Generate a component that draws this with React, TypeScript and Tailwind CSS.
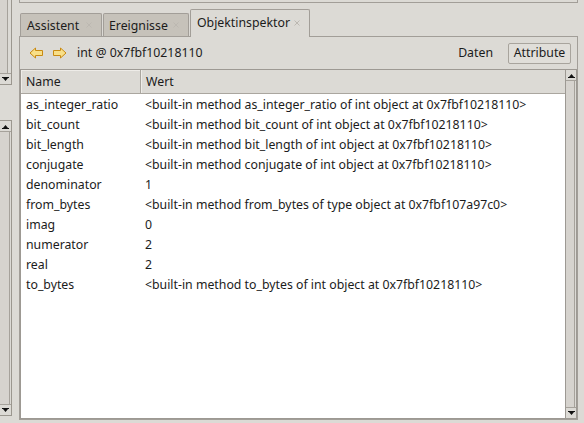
import React from "react";

const rows: [string, string][] = [
  ["as_integer_ratio", "<built-in method as_integer_ratio of int object at 0x7fbf10218110>"],
  ["bit_count", "<built-in method bit_count of int object at 0x7fbf10218110>"],
  ["bit_length", "<built-in method bit_length of int object at 0x7fbf10218110>"],
  ["conjugate", "<built-in method conjugate of int object at 0x7fbf10218110>"],
  ["denominator", "1"],
  ["from_bytes", "<built-in method from_bytes of type object at 0x7fbf107a97c0>"],
  ["imag", "0"],
  ["numerator", "2"],
  ["real", "2"],
  ["to_bytes", "<built-in method to_bytes of int object at 0x7fbf10218110>"],
];

function ArrowLeft() {
  return (
    <svg width="15" height="12" viewBox="0 0 15 12">
      <path
        d="M1 6 L6.5 1 V3.5 H13.5 V8.5 H6.5 V11 Z"
        fill="#f8df88"
        stroke="#c98a12"
        strokeWidth="1"
        strokeLinejoin="round"
      />
    </svg>
  );
}

function ArrowRight() {
  return (
    <svg width="15" height="12" viewBox="0 0 15 12">
      <path
        d="M14 6 L8.5 1 V3.5 H1.5 V8.5 H8.5 V11 Z"
        fill="#f8df88"
        stroke="#c98a12"
        strokeWidth="1"
        strokeLinejoin="round"
      />
    </svg>
  );
}

function TriDown() {
  return (
    <svg width="7" height="5" viewBox="0 0 7 5">
      <path d="M0 0 H7 V1 H0 Z M1 1 H6 L3.5 4 Z" fill="#111" />
    </svg>
  );
}

function TriUp() {
  return (
    <svg width="7" height="5" viewBox="0 0 7 5">
      <path d="M0 4 H7 V5 H0 Z M1 4 H6 L3.5 1 Z" fill="#111" />
    </svg>
  );
}

function Close() {
  return (
    <svg width="6" height="6" viewBox="0 0 6 6">
      <path d="M0.5 0.5 L5.5 5.5 M5.5 0.5 L0.5 5.5" stroke="#bcb8b1" strokeWidth="1" />
    </svg>
  );
}

export default function App() {
  return (
    <div className="w-[584px] h-[423px] bg-[#dcdad5] flex overflow-hidden font-['Noto_Sans','Open_Sans',sans-serif] text-[#1b1b1b] text-[12.3px]">
      {/* left scrollbars */}
      <div className="w-[12px] flex flex-col">
        <div className="h-[85px] flex flex-col border-r border-b border-[#9b978f]">
          <div className="flex-1 flex">
            <div className="w-[8px] border-r border-[#a6a29b] bg-[#d6d3ce]" />
            <div className="flex-1" />
          </div>
          <div className="h-[11px] border-t border-[#a6a29b] flex items-center justify-center">
            <TriDown />
          </div>
        </div>
        <div className="h-[35px]" />
        <div className="h-[296px] flex flex-col border-r border-t border-b border-[#9b978f]">
          <div className="h-[11px] border-b border-[#a6a29b] flex items-center justify-center">
            <TriUp />
          </div>
          <div className="flex-1 flex">
            <div className="w-[10px] border-r border-[#a6a29b] bg-[#d6d3ce]" />
            <div className="flex-1" />
          </div>
          <div className="h-[11px] border-t border-[#a6a29b] flex items-center justify-center">
            <TriDown />
          </div>
        </div>
      </div>

      <div className="w-[7px]" />

      {/* main */}
      <div className="w-[559px] flex flex-col">
        <div className="h-[3px] border-l border-r border-b border-[#a29e98]" />
        <div className="h-[6px]" />
        <div className="h-[27px] flex items-end pl-px">
          <div className="w-[82px] h-[23px] flex items-center justify-between pl-[6px] pr-[9px] bg-[#c6c2ba] border border-b-0 border-[#a29e98] rounded-t-[2px]">
            <span className="leading-[16px] pt-px">Assistent</span>
            <Close />
          </div>
          <div className="w-[86px] h-[23px] ml-px flex items-center justify-between pl-[5px] pr-[9px] bg-[#c6c2ba] border border-b-0 border-[#a29e98] rounded-t-[2px]">
            <span className="leading-[16px] pt-px">Ereignisse</span>
            <Close />
          </div>
          <div className="w-[120px] h-[28px] ml-[1px] -mb-px relative z-10 flex items-start justify-between pt-[5px] pl-[6px] pr-[9px] bg-[#dcdad5] border border-b-0 border-[#a29e98] rounded-t-[2px]">
            <span className="leading-[16px]">Objektinspektor</span>
            <div className="pt-[5px]">
              <Close />
            </div>
          </div>
        </div>
        <div className="h-[384px] border border-[#a29e98] flex flex-col">
          {/* toolbar */}
          <div className="h-[32px] flex items-center pl-[9px] pr-[6px]">
            <ArrowLeft />
            <div className="w-[8px]" />
            <ArrowRight />
            <span className="ml-[10px] pt-px">int @ 0x7fbf10218110</span>
            <div className="flex-1" />
            <span className="mr-[15px] pt-px">Daten</span>
            <div className="h-[21px] w-[63px] flex items-center justify-center border border-[#a8a49d] bg-[#e0ded9] rounded-[2px] pt-px">
              Attribute
            </div>
          </div>
          {/* table */}
          <div className="h-[350px] border border-[#9d9993] flex">
            <div className="w-[544px] flex flex-col">
              <div className="h-[24px] flex border-b border-[#aaa69f] bg-[#dcdad5]">
                <div className="w-[120px] border-r border-[#aaa69f] flex items-center pl-[5px] pt-[2px] shadow-[inset_1px_1px_0_#eeece8]">
                  Name
                </div>
                <div className="flex-1 flex items-center pl-[4px] pt-[2px] border-l border-[#eeece8]">Wert</div>
              </div>
              <div className="flex-1 bg-white flex flex-col">
                {rows.map(([n, v]) => (
                  <div key={n} className="h-[20px] flex items-center pt-[2px] whitespace-nowrap">
                    <div className="w-[120px] pl-[5px]">{n}</div>
                    <div className="pl-[4px]">{v}</div>
                  </div>
                ))}
              </div>
            </div>
            <div className="w-[11px] flex flex-col border-l border-[#9d9993] bg-[#dcdad5]">
              <div className="h-[11px] border-b border-[#a6a29b] flex items-center justify-center">
                <TriUp />
              </div>
              <div className="flex-1 flex">
                <div className="w-[9px] border-r border-[#a6a29b] bg-[#d6d3ce]" />
              </div>
              <div className="h-[11px] border-t border-[#a6a29b] flex items-center justify-center">
                <TriDown />
              </div>
            </div>
          </div>
        </div>
      </div>
    </div>
  );
}
